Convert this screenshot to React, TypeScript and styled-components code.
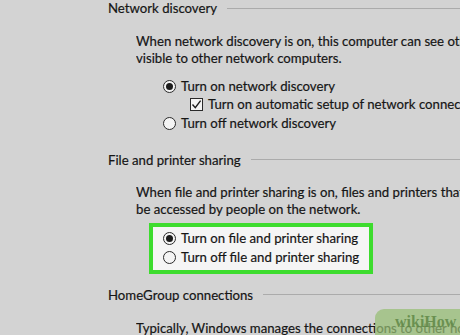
import React from "react";
import styled, { createGlobalStyle } from "styled-components";

const Global = createGlobalStyle`
  html, body { margin: 0; padding: 0; background: #d3d3d3; }
  body { width: 460px; height: 335px; overflow: hidden; }
`;

const Page = styled.div`
  position: relative;
  width: 460px;
  height: 335px;
  overflow: hidden;
  background: #d3d3d3;
  box-sizing: border-box;
  padding-left: 108px;
  font-family: "Lato", "Open Sans", sans-serif;
  font-size: 13.2px;
  line-height: 17px;
  color: #161616;
  -webkit-text-stroke: 0.2px #161616;
  white-space: nowrap;
`;

const Header = styled.div<{ $mt: number }>`
  display: flex;
  align-items: center;
  gap: 10px;
  height: 17px;
  margin-top: ${(p) => p.$mt}px;
`;

const Rule = styled.div`
  flex: 1;
  height: 1px;
  background: #ababab;
  margin-top: -1px;
`;

const Desc = styled.div<{ $mt: number; $lines: number }>`
  margin-left: 28px;
  margin-top: ${(p) => p.$mt}px;
  height: ${(p) => p.$lines * 17}px;
  overflow: hidden;
`;

const Options = styled.div<{ $mt: number }>`
  display: flex;
  flex-direction: column;
  margin-left: 55px;
  margin-top: ${(p) => p.$mt}px;
`;

const Row = styled.div<{ $indent?: number; $h?: number }>`
  display: flex;
  align-items: center;
  gap: 5px;
  height: ${(p) => p.$h ?? 18.5}px;
  margin-left: ${(p) => p.$indent ?? 0}px;
`;

const Radio = styled.span<{ $on?: boolean }>`
  box-sizing: border-box;
  flex: 0 0 13px;
  width: 13px;
  height: 13px;
  border-radius: 50%;
  border: 1.3px solid #2a2a2a;
  background: #f4f4f4;
  display: flex;
  align-items: center;
  justify-content: center;
  &::after {
    content: "";
    width: 7px;
    height: 7px;
    border-radius: 50%;
    background: ${(p) => (p.$on ? "#1c1c1c" : "transparent")};
  }
`;

const Check = styled.span`
  box-sizing: border-box;
  flex: 0 0 13px;
  width: 13px;
  height: 13px;
  border: 1.3px solid #2a2a2a;
  background: #f4f4f4;
  display: flex;
  align-items: center;
  justify-content: center;
`;

const Highlight = styled.div`
  box-sizing: border-box;
  width: 224px;
  height: 51px;
  margin-left: 41px;
  margin-top: 4.5px;
  border: 4px solid #3ddc2e;
  background: #f5f5f5;
  padding: 2px 0 0 10px;
  display: flex;
  flex-direction: column;
`;

const Watermark = styled.div`
  position: absolute;
  right: -10px;
  bottom: -8px;
  width: 95px;
  height: 34px;
  border-radius: 9px 0 0 0;
  background: rgba(150, 190, 115, 0.72);
  display: flex;
  align-items: flex-start;
  padding: 5px 0 0 20px;
  box-sizing: border-box;
  font-family: "Liberation Serif", serif;
  font-weight: bold;
  font-size: 16px;
  line-height: 16px;
  -webkit-text-stroke: 0;
  color: rgba(95, 135, 70, 0.85);
`;

const CheckMark = () => (
  <svg width="11" height="11" viewBox="0 0 11 11">
    <path d="M1.5 5.5 L4.3 8.6 L9.6 1.6" fill="none" stroke="#1c1c1c" strokeWidth="1.4" />
  </svg>
);

export default function App() {
  return (
    <>
      <Global />
      <Page>
        <Header $mt={0}>
          <span>Network discovery</span>
          <Rule />
        </Header>
        <Desc $mt={16} $lines={2}>
          When network discovery is on, this computer can see other network computers and devices and is
          <br />
          visible to other network computers.
        </Desc>
        <Options $mt={10}>
          <Row>
            <Radio $on />
            <span>Turn on network discovery</span>
          </Row>
          <Row $indent={27}>
            <Check>
              <CheckMark />
            </Check>
            <span>Turn on automatic setup of network connected devices.</span>
          </Row>
          <Row>
            <Radio />
            <span>Turn off network discovery</span>
          </Row>
        </Options>
        <Header $mt={19}>
          <span>File and printer sharing</span>
          <Rule />
        </Header>
        <Desc $mt={15.5} $lines={2}>
          When file and printer sharing is on, files and printers that you have shared from this computer can
          <br />
          be accessed by people on the network.
        </Desc>
        <Highlight>
          <Row $h={19}>
            <Radio $on />
            <span>Turn on file and printer sharing</span>
          </Row>
          <Row $h={19}>
            <Radio />
            <span>Turn off file and printer sharing</span>
          </Row>
        </Highlight>
        <Header $mt={13}>
          <span>HomeGroup connections</span>
          <Rule />
        </Header>
        <Desc $mt={16} $lines={1}>
          Typically, Windows manages the connections to other homegroup computers.
        </Desc>
        <Watermark>wikiHow</Watermark>
      </Page>
    </>
  );
}
